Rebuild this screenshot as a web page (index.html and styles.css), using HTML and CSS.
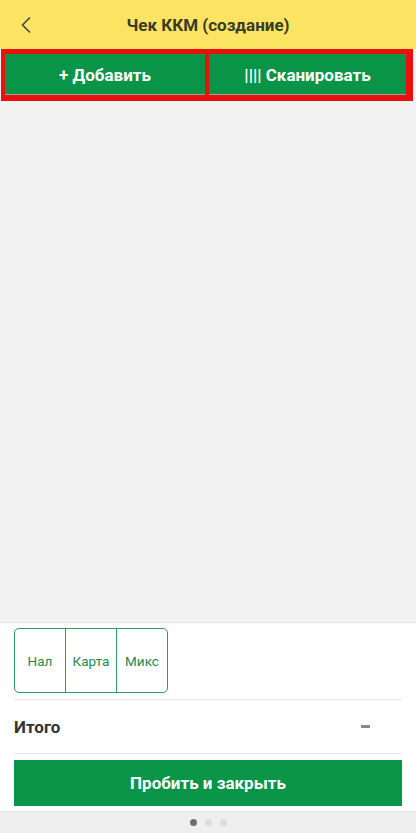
FILE: index.html
```html
<!DOCTYPE html>
<html lang="ru">
<head>
<meta charset="utf-8">
<link rel="stylesheet" href="styles.css">
</head>
<body>
<div class="app">
  <header class="header">
    <span class="back">
      <svg width="12" height="18" viewBox="0 0 12 18"><path d="M10 1.5 L2.5 9 L10 16.5" fill="none" stroke="#444" stroke-width="1.6"/></svg>
    </span>
    <h1 class="title">Чек ККМ (создание)</h1>
  </header>
  <div class="toolbar">
    <button class="tbtn">+ Добавить</button>
    <button class="tbtn tbtn-right">|||| Сканировать</button>
  </div>
  <main class="content"></main>
  <section class="panel">
    <div class="segment">
      <div class="seg">Нал</div>
      <div class="seg">Карта</div>
      <div class="seg">Микс</div>
    </div>
    <div class="total">
      <span class="total-label">Итого</span>
      <span class="total-dash"></span>
    </div>
    <button class="submit">Пробить и закрыть</button>
  </section>
  <footer class="dots">
    <span class="dot active"></span>
    <span class="dot"></span>
    <span class="dot"></span>
  </footer>
</div>
</body>
</html>
```
FILE: styles.css
```css
* { box-sizing: border-box; }
html, body { margin: 0; padding: 0; }
body {
  width: 416px;
  height: 833px;
  font-family: Roboto, "Noto Sans", sans-serif;
  background: #f2f2f2;
}
.app {
  display: flex;
  flex-direction: column;
  height: 833px;
}
.header {
  height: 49px;
  background: #fbe462;
  display: flex;
  align-items: center;
  justify-content: center;
  position: relative;
}
.back {
  position: absolute;
  left: 20px;
  top: 16px;
  display: flex;
}
.title {
  margin: 0;
  font-size: 17px;
  font-weight: 700;
  color: #3a3a2a;
}
.toolbar {
  display: flex;
  padding-left: 1px;
  height: 52px;
  background: #f2f2f2;
}
.tbtn {
  width: 208px;
  height: 52px;
  border: 4px solid #e8110f;
  border-top-width: 5px;
  border-bottom-width: 6px;
  background: #0a9447;
  color: #fff;
  font-family: Roboto, "Noto Sans", sans-serif;
  font-size: 17px;
  font-weight: 700;
  padding: 0;
  box-shadow: inset 0 -1px 0 #9aa59a;
}
.tbtn-right {
  margin-left: -4px;
  border-right-width: 7px;
}
.content {
  flex: 1;
  background: #f2f2f2;
}
.panel {
  background: #fff;
  border-top: 1px solid #e2e2e2;
  padding: 5px 14px 5px 14px;
}
.segment {
  display: flex;
  width: 154px;
  height: 65px;
  border: 1.5px solid #2e9a60;
  border-radius: 5px;
}
.seg {
  flex: 1;
  display: flex;
  align-items: center;
  justify-content: center;
  color: #1f8a4e;
  font-size: 13.5px;
}
.seg + .seg {
  border-left: 1.5px solid #2e9a60;
}
.total {
  margin-top: 6px;
  border-top: 1px solid #e6e6e6;
  border-bottom: 1px solid #e6e6e6;
  height: 55px;
  display: flex;
  align-items: center;
  justify-content: space-between;
}
.total-label {
  font-size: 17px;
  font-weight: 700;
  color: #333;
}
.total-dash {
  width: 9px;
  height: 3px;
  background: #8a8a8a;
  margin-right: 32px;
}
.submit {
  margin-top: 6px;
  width: 388px;
  height: 46px;
  border: none;
  background: #0a9447;
  color: #fff;
  font-family: Roboto, "Noto Sans", sans-serif;
  font-size: 17px;
  font-weight: 700;
  display: block;
}
.dots {
  height: 22px;
  background: #efefef;
  border-top: 1px solid #e2e2e2;
  display: flex;
  justify-content: center;
  align-items: center;
  gap: 8px;
}
.dot {
  width: 7px;
  height: 7px;
  border-radius: 50%;
  background: #dcdcdc;
}
.dot.active { background: #6f6f6f; }
```
